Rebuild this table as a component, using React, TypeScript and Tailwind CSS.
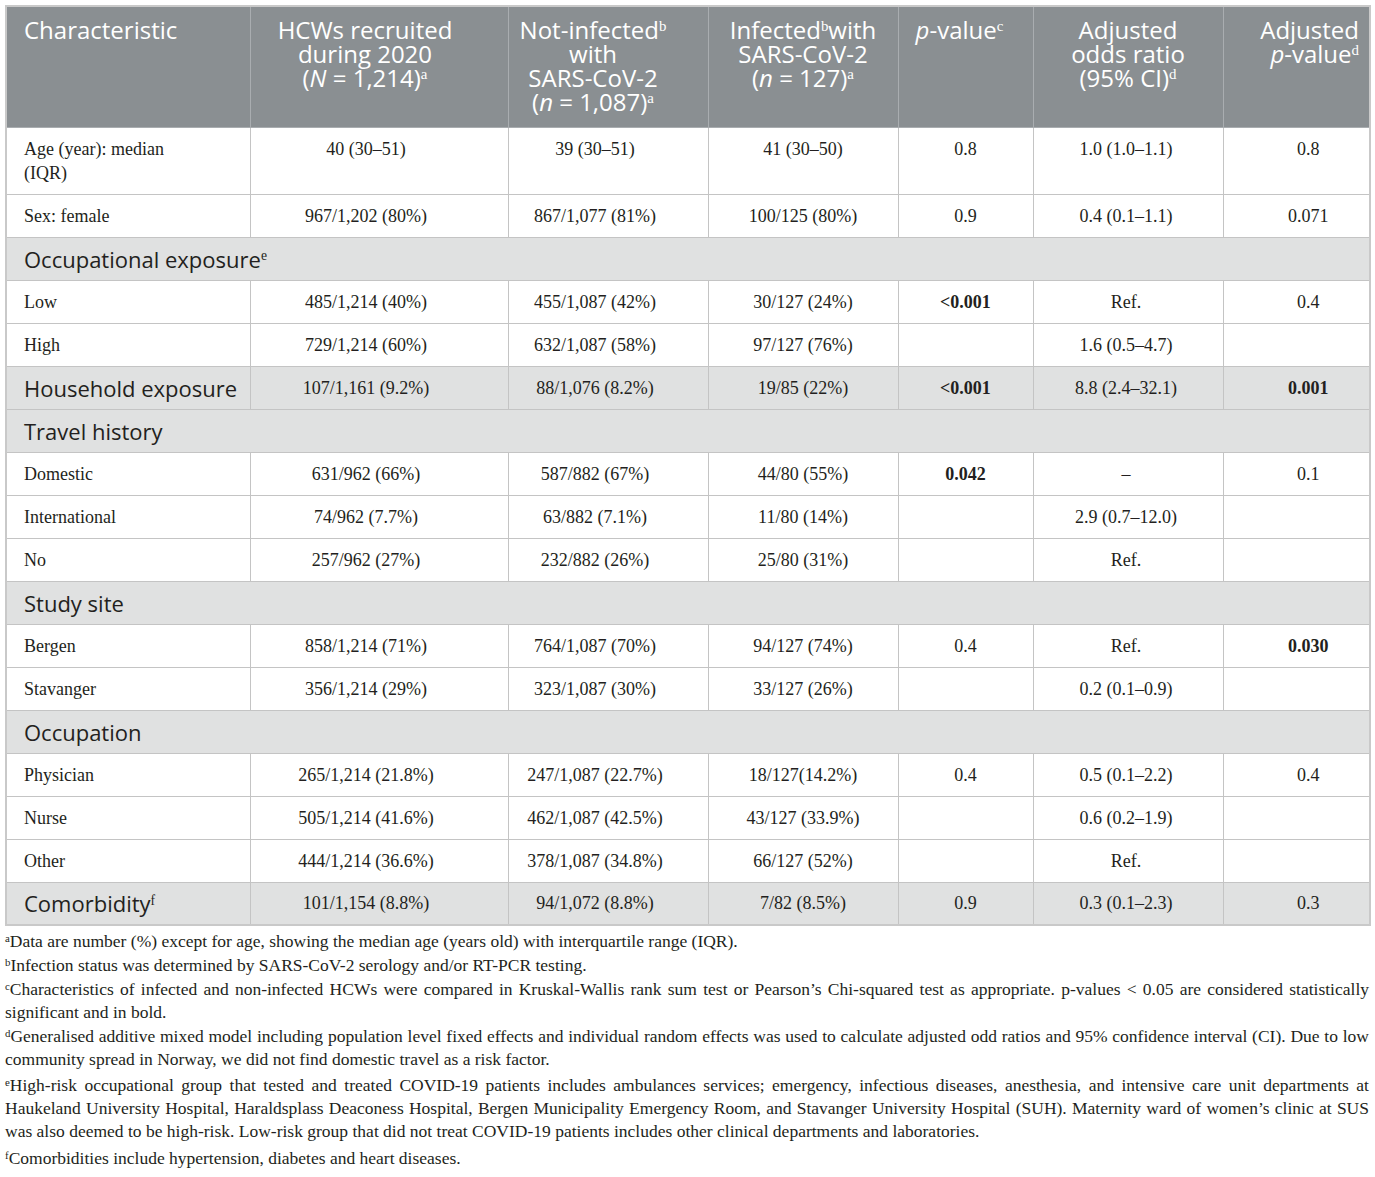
import React from "react";

type Row =
  | { kind: "section"; label: React.ReactNode; cells?: React.ReactNode[] }
  | { kind: "data"; label: React.ReactNode; cells: React.ReactNode[] };

const B = ({ children }: { children: React.ReactNode }) => (
  <span className="font-bold">{children}</span>
);

const Sup = ({ children }: { children: React.ReactNode }) => (
  <sup className="text-[0.62em] -top-[0.55em] font-['Liberation_Serif',serif]">{children}</sup>
);

const rows: Row[] = [
  {
    kind: "data",
    label: (
      <>
        Age (year): median
        <br />
        (IQR)
      </>
    ),
    cells: ["40 (30–51)", "39 (30–51)", "41 (30–50)", "0.8", "1.0 (1.0–1.1)", "0.8"],
  },
  {
    kind: "data",
    label: "Sex: female",
    cells: ["967/1,202 (80%)", "867/1,077 (81%)", "100/125 (80%)", "0.9", "0.4 (0.1–1.1)", "0.071"],
  },
  { kind: "section", label: <>Occupational exposure<Sup>e</Sup></> },
  {
    kind: "data",
    label: "Low",
    cells: ["485/1,214 (40%)", "455/1,087 (42%)", "30/127 (24%)", <B>&lt;0.001</B>, "Ref.", "0.4"],
  },
  {
    kind: "data",
    label: "High",
    cells: ["729/1,214 (60%)", "632/1,087 (58%)", "97/127 (76%)", "", "1.6 (0.5–4.7)", ""],
  },
  {
    kind: "section",
    label: "Household exposure",
    cells: ["107/1,161 (9.2%)", "88/1,076 (8.2%)", "19/85 (22%)", <B>&lt;0.001</B>, "8.8 (2.4–32.1)", <B>0.001</B>],
  },
  { kind: "section", label: "Travel history" },
  {
    kind: "data",
    label: "Domestic",
    cells: ["631/962 (66%)", "587/882 (67%)", "44/80 (55%)", <B>0.042</B>, "–", "0.1"],
  },
  {
    kind: "data",
    label: "International",
    cells: ["74/962 (7.7%)", "63/882 (7.1%)", "11/80 (14%)", "", "2.9 (0.7–12.0)", ""],
  },
  {
    kind: "data",
    label: "No",
    cells: ["257/962 (27%)", "232/882 (26%)", "25/80 (31%)", "", "Ref.", ""],
  },
  { kind: "section", label: "Study site" },
  {
    kind: "data",
    label: "Bergen",
    cells: ["858/1,214 (71%)", "764/1,087 (70%)", "94/127 (74%)", "0.4", "Ref.", <B>0.030</B>],
  },
  {
    kind: "data",
    label: "Stavanger",
    cells: ["356/1,214 (29%)", "323/1,087 (30%)", "33/127 (26%)", "", "0.2 (0.1–0.9)", ""],
  },
  { kind: "section", label: "Occupation" },
  {
    kind: "data",
    label: "Physician",
    cells: ["265/1,214 (21.8%)", "247/1,087 (22.7%)", "18/127(14.2%)", "0.4", "0.5 (0.1–2.2)", "0.4"],
  },
  {
    kind: "data",
    label: "Nurse",
    cells: ["505/1,214 (41.6%)", "462/1,087 (42.5%)", "43/127 (33.9%)", "", "0.6 (0.2–1.9)", ""],
  },
  {
    kind: "data",
    label: "Other",
    cells: ["444/1,214 (36.6%)", "378/1,087 (34.8%)", "66/127 (52%)", "", "Ref.", ""],
  },
  {
    kind: "section",
    label: <>Comorbidity<Sup>f</Sup></>,
    cells: ["101/1,154 (8.8%)", "94/1,072 (8.8%)", "7/82 (8.5%)", "0.9", "0.3 (0.1–2.3)", "0.3"],
  },
];

const widths = ["w-[244px]", "w-[258px]", "w-[200px]", "w-[190px]", "w-[135px]", "w-[190px]", "w-[147px]"];
// per-column horizontal padding for data cells (content sits a little off-centre in the source)
const cellPad = ["pr-[30px] pl-1", "pr-[30px] pl-1", "px-1", "px-1", "pr-[8px] pl-1", "pl-[28px] pr-1"];

const sans = "font-['Open_Sans',sans-serif]";
const serif = "font-['Liberation_Serif',serif]";

const footnotes: { mark: string; text: string; gap: string }[] = [
  {
    mark: "a",
    gap: "",
    text: "Data are number (%) except for age, showing the median age (years old) with interquartile range (IQR).",
  },
  { mark: "b", gap: "mt-[1px]", text: "Infection status was determined by SARS-CoV-2 serology and/or RT-PCR testing." },
  {
    mark: "c",
    gap: "",
    text: "Characteristics of infected and non-infected HCWs were compared in Kruskal-Wallis rank sum test or Pearson’s Chi-squared test as appropriate. p-values < 0.05 are considered statistically significant and in bold.",
  },
  {
    mark: "d",
    gap: "",
    text: "Generalised additive mixed model including population level fixed effects and individual random effects was used to calculate adjusted odd ratios and 95% confidence interval (CI). Due to low community spread in Norway, we did not find domestic travel as a risk factor.",
  },
  {
    mark: "e",
    gap: "mt-[3px]",
    text: "High-risk occupational group that tested and treated COVID-19 patients includes ambulances services; emergency, infectious diseases, anesthesia, and intensive care unit departments at Haukeland University Hospital, Haraldsplass Deaconess Hospital, Bergen Municipality Emergency Room, and Stavanger University Hospital (SUH). Maternity ward of women’s clinic at SUS was also deemed to be high-risk. Low-risk group that did not treat COVID-19 patients includes other clinical departments and laboratories.",
  },
  { mark: "f", gap: "mt-[4px]", text: "Comorbidities include hypertension, diabetes and heart diseases." },
];

const th = "border border-[#a9adb0] align-top font-normal pt-[11px]";

export default function App() {
  return (
    <div className="bg-white w-[1375px] min-h-[1177px] pt-[5px] pl-[5px] text-[#231f20]">
      <table className="w-[1364px] table-fixed border-collapse border-2 border-[#c9c9c9]">
        <colgroup>
          {widths.map((w, i) => (
            <col key={i} className={w} />
          ))}
        </colgroup>
        <thead>
          <tr className={`bg-[#8a8f92] text-white ${sans} text-[24px] leading-[24px] h-[121px]`}>
            <th className={`${th} text-left pl-[17px]`}>Characteristic</th>
            <th className={`${th} pr-[28px]`}>
              HCWs recruited
              <br />
              during 2020
              <br />
              (<i>N</i> = 1,214)<Sup>a</Sup>
            </th>
            <th className={`${th} pr-[30px]`}>
              Not-infected<Sup>b</Sup>
              <br />
              with
              <br />
              SARS-CoV-2
              <br />
              (<i>n</i> = 1,087)<Sup>a</Sup>
            </th>
            <th className={th}>
              Infected<Sup>b</Sup>with
              <br />
              SARS-CoV-2
              <br />
              (<i>n</i> = 127)<Sup>a</Sup>
            </th>
            <th className={`${th} pr-[12px]`}>
              <i>p</i>-value<Sup>c</Sup>
            </th>
            <th className={th}>
              Adjusted
              <br />
              odds ratio
              <br />
              (95% CI)<Sup>d</Sup>
            </th>
            <th className={`${th} text-right pr-[10px]`}>
              Adjusted
              <br />
              <i>p</i>-value<Sup>d</Sup>
            </th>
          </tr>
        </thead>
        <tbody>
          {rows.map((r, i) => {
            if (r.kind === "section" && !r.cells) {
              return (
                <tr key={i} className="bg-[#e0e1e1] h-[43px]">
                  <td
                    colSpan={7}
                    className={`border border-[#c4c4c4] ${sans} text-[22px] leading-[24px] pl-[17px] align-middle`}
                  >
                    {r.label}
                  </td>
                </tr>
              );
            }
            const section = r.kind === "section";
            return (
              <tr key={i} className={`${section ? "bg-[#e0e1e1]" : "bg-white"} h-[43px]`}>
                <td
                  className={`border border-[#c4c4c4] pl-[17px] ${
                    section
                      ? `${sans} text-[22px] leading-[24px] align-middle`
                      : `${serif} text-[18px] leading-[24px] align-top pt-[9px] pb-[9px]`
                  }`}
                >
                  {r.label}
                </td>
                {r.cells!.map((c, j) => (
                  <td
                    key={j}
                    className={`border border-[#c4c4c4] ${serif} text-[18px] leading-[24px] text-center ${cellPad[j]} ${
                      section ? "align-middle" : "align-top pt-[9px]"
                    }`}
                  >
                    {c}
                  </td>
                ))}
              </tr>
            );
          })}
        </tbody>
      </table>
      <div className={`w-[1364px] mt-[4px] ${serif} text-[17.5px] leading-[23px] text-justify`}>
        {footnotes.map((f) => (
          <p key={f.mark} className={`mb-[1px] ${f.gap}`}>
            <sup className="text-[0.62em] -top-[0.5em]">{f.mark}</sup>
            {f.text}
          </p>
        ))}
      </div>
    </div>
  );
}
